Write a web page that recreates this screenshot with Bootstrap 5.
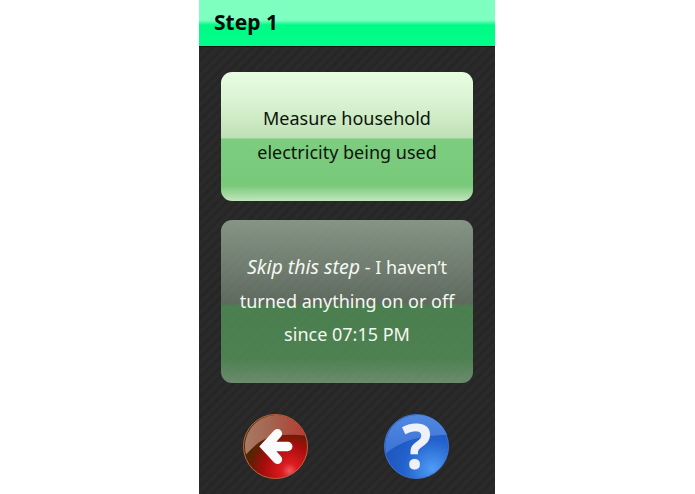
<!DOCTYPE html>
<html lang="en">
<head>
<meta charset="utf-8">
<title>Step 1</title>
<link href="https://cdn.jsdelivr.net/npm/bootstrap@5.3.0/dist/css/bootstrap.min.css" rel="stylesheet">
<style>
html, body { height: 100%; background: #fff; overflow: hidden; }
.stage { padding-right: 1px; }
.phone {
  width: 296px; height: 494px; font-family: "Noto Sans", "Open Sans", sans-serif;
  background: repeating-linear-gradient(135deg, #262626 0 3px, #2a2a2a 3px 7px);
}
.step-bar {
  height: 47px; padding-left: 15px; border-bottom: 1px solid #06140d;
  background: linear-gradient(#7dffc0 0, #80ffc2 20px, #00fa86 25px, #00ff88 100%);
  color: #0a0a0a; font-size: 21px; font-weight: 700; line-height: 44px;
}
.step-body { padding: 25px 22px 0; gap: 19px; }
.pane { width: 252px; border-radius: 11px; font-size: 18px; line-height: 33.5px; }
.pane-measure {
  height: 129px; color: #0c140c; padding-bottom: 2px;
  background: linear-gradient(#e8fde2 0, #d8f2d0 25%, #bfe0b6 51%, #7ccd7f 52%, #78c97a 88%, #c2e6bd 100%);
}
.pane-skip {
  height: 163px; color: #f4f8f2; padding-bottom: 1px;
  background: linear-gradient(rgba(170,190,170,.72) 0, rgba(130,150,130,.6) 51%, rgba(90,160,95,.72) 53%, rgba(90,160,95,.74) 85%, rgba(140,185,142,.68) 100%);
}
.pane-skip em { font-size: 19.5px; }
.round-actions { gap: 76px; margin-top: 31px; padding-right: 2px; }
.round-icon { width: 65px; height: 65px; display: block; overflow: visible; }
.help-mark { font-family: "Noto Sans", sans-serif; font-weight: 700; font-size: 63px; fill: #eef1f8; }
</style>
</head>
<body class="m-0">
<div class="stage d-flex justify-content-center">
  <div class="phone d-flex flex-column">
    <div class="step-bar">Step 1</div>
    <div class="step-body d-flex flex-column">
      <div class="pane pane-measure d-flex align-items-center justify-content-center text-center">
        <div>Measure household<br>electricity being used</div>
      </div>
      <div class="pane pane-skip d-flex align-items-center justify-content-center text-center">
        <div><em>Skip this step</em> - I haven’t<br>turned anything on or off<br>since 07:15 PM</div>
      </div>
    </div>
    <div class="round-actions d-flex justify-content-center">
      <svg class="round-icon" viewBox="0 0 66 66" role="img" aria-label="Back">
        <defs>
          <radialGradient id="redBase" cx="0.72" cy="0.88" r="0.85">
            <stop offset="0" stop-color="#ee5a60"/>
            <stop offset="0.14" stop-color="#dc1c20"/>
            <stop offset="0.48" stop-color="#a80c0c"/>
            <stop offset="0.75" stop-color="#5a2204"/>
            <stop offset="1" stop-color="#443000"/>
          </radialGradient>
          <linearGradient id="redGloss" x1="0" y1="0" x2="1" y2="0">
            <stop offset="0" stop-color="#a87a64"/>
            <stop offset="0.5" stop-color="#a4604c"/>
            <stop offset="1" stop-color="#b83a32"/>
          </linearGradient>
        </defs>
        <circle cx="33" cy="33" r="32.5" fill="url(#redBase)" stroke="#c4643f" stroke-width="1"/>
        <path d="M3 41 C12 32 20 23 36 21.5 C46 20.5 56 21 63.5 22 A32 32 0 0 0 33 1 A32 32 0 0 0 3 41 Z" fill="url(#redGloss)"/>
        <path d="M45.5 33 H23 M35 20 L23 33 L35 46" fill="none" stroke="#fbfbfb" stroke-width="9.5" stroke-linecap="round" stroke-linejoin="miter"/>
      </svg>
      <svg class="round-icon" viewBox="0 0 66 66" role="img" aria-label="Help">
        <defs>
          <radialGradient id="blueBase" cx="0.75" cy="0.85" r="0.9">
            <stop offset="0" stop-color="#4f9cf5"/>
            <stop offset="0.5" stop-color="#2362cc"/>
            <stop offset="1" stop-color="#1f4fb8"/>
          </radialGradient>
          <linearGradient id="blueGloss" x1="0" y1="0" x2="0" y2="1">
            <stop offset="0" stop-color="#5188e0"/>
            <stop offset="1" stop-color="#3c74d6"/>
          </linearGradient>
        </defs>
        <circle cx="33" cy="33" r="32.5" fill="url(#blueBase)" stroke="#3e74cc" stroke-width="1"/>
        <path d="M2 40 C14 30 30 22 64 21 A32 32 0 0 0 33 1 A32 32 0 0 0 2 40 Z" fill="url(#blueGloss)"/>
        <text class="help-mark" x="33" y="55.5" text-anchor="middle">?</text>
      </svg>
    </div>
  </div>
</div>
<script src="https://cdn.jsdelivr.net/npm/bootstrap@5.3.0/dist/js/bootstrap.bundle.min.js"></script>
</body>
</html>
